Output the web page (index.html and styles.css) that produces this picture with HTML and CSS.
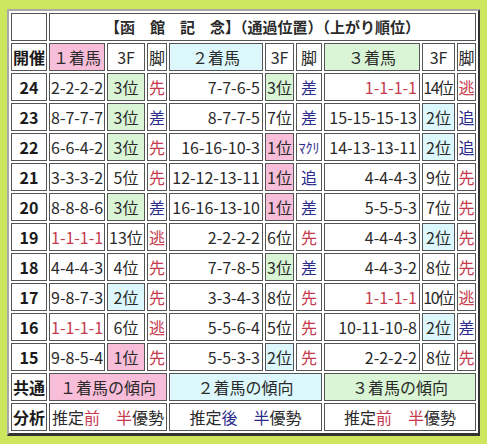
FILE: index.html
```html
<!DOCTYPE html>
<html lang="ja">
<head>
<meta charset="utf-8">
<title>函館記念</title>
<link rel="stylesheet" href="styles.css">
</head>
<body>
<table class="race">
  <colgroup>
    <col class="c-year"><col class="c-pos1"><col class="c-f1"><col class="c-k1">
    <col class="c-pos2"><col class="c-f2"><col class="c-k2">
    <col class="c-pos3"><col class="c-f3"><col class="c-k3">
  </colgroup>
  <tr>
    <td></td>
    <td colspan="9" class="title">【函　館　記　念】（通過位置）（上がり順位）</td>
  </tr>
  <tr class="head">
    <td class="lbl">開催</td>
    <td class="pink">１着馬</td><td>3F</td><td>脚</td>
    <td class="cyan">２着馬</td><td>3F</td><td>脚</td>
    <td class="green">３着馬</td><td>3F</td><td>脚</td>
  </tr>
  <tr>
    <td class="lbl">24</td>
    <td class="p1">2-2-2-2</td><td class="green">3位</td><td class="r">先</td>
    <td class="pr">7-7-6-5</td><td class="green">3位</td><td class="b">差</td>
    <td class="pr r">1-1-1-1</td><td class="tight">14位</td><td class="r">逃</td>
  </tr>
  <tr>
    <td class="lbl">23</td>
    <td class="p1">8-7-7-7</td><td class="green">3位</td><td class="b">差</td>
    <td class="pr">8-7-7-5</td><td>7位</td><td class="b">差</td>
    <td class="pr">15-15-15-13</td><td class="cyan">2位</td><td class="b">追</td>
  </tr>
  <tr>
    <td class="lbl">22</td>
    <td class="p1">6-6-4-2</td><td class="green">3位</td><td class="r">先</td>
    <td class="pr">16-16-10-3</td><td class="pink">1位</td><td class="b small">ﾏｸﾘ</td>
    <td class="pr">14-13-13-11</td><td class="cyan">2位</td><td class="b">追</td>
  </tr>
  <tr>
    <td class="lbl">21</td>
    <td class="p1">3-3-3-2</td><td>5位</td><td class="r">先</td>
    <td class="pr">12-12-13-11</td><td class="pink">1位</td><td class="b">追</td>
    <td class="pr">4-4-4-3</td><td>9位</td><td class="r">先</td>
  </tr>
  <tr>
    <td class="lbl">20</td>
    <td class="p1">8-8-8-6</td><td class="green">3位</td><td class="b">差</td>
    <td class="pr">16-16-13-10</td><td class="pink">1位</td><td class="b">差</td>
    <td class="pr">5-5-5-3</td><td>7位</td><td class="r">先</td>
  </tr>
  <tr>
    <td class="lbl">19</td>
    <td class="p1 r">1-1-1-1</td><td>13位</td><td class="r">逃</td>
    <td class="pr">2-2-2-2</td><td>6位</td><td class="r">先</td>
    <td class="pr">4-4-4-3</td><td class="cyan">2位</td><td class="r">先</td>
  </tr>
  <tr>
    <td class="lbl">18</td>
    <td class="p1">4-4-4-3</td><td>4位</td><td class="r">先</td>
    <td class="pr">7-7-8-5</td><td class="green">3位</td><td class="b">差</td>
    <td class="pr">4-4-3-2</td><td>8位</td><td class="r">先</td>
  </tr>
  <tr>
    <td class="lbl">17</td>
    <td class="p1">9-8-7-3</td><td class="cyan">2位</td><td class="r">先</td>
    <td class="pr">3-3-4-3</td><td>8位</td><td class="r">先</td>
    <td class="pr r">1-1-1-1</td><td class="tight">10位</td><td class="r">逃</td>
  </tr>
  <tr>
    <td class="lbl">16</td>
    <td class="p1 r">1-1-1-1</td><td>6位</td><td class="r">逃</td>
    <td class="pr">5-5-6-4</td><td>5位</td><td class="r">先</td>
    <td class="pr">10-11-10-8</td><td class="cyan">2位</td><td class="b">差</td>
  </tr>
  <tr>
    <td class="lbl">15</td>
    <td class="p1">9-8-5-4</td><td class="pink">1位</td><td class="r">先</td>
    <td class="pr">5-5-3-3</td><td class="cyan">2位</td><td class="r">先</td>
    <td class="pr">2-2-2-2</td><td>8位</td><td class="r">先</td>
  </tr>
  <tr class="trend">
    <td class="lbl">共通</td>
    <td colspan="3" class="pink">１着馬の傾向</td>
    <td colspan="3" class="cyan">２着馬の傾向</td>
    <td colspan="3" class="green">３着馬の傾向</td>
  </tr>
  <tr>
    <td class="lbl">分析</td>
    <td colspan="3">推定<span class="r">前</span>　<span class="r">半</span>優勢</td>
    <td colspan="3">推定<span class="b">後</span>　<span class="b">半</span>優勢</td>
    <td colspan="3">推定<span class="r">前</span>　<span class="r">半</span>優勢</td>
  </tr>
</table>
</body>
</html>
```

FILE: styles.css
```css
html, body {
  background: #cde65e;
}
body {
  margin: 9px 7px;
  font-family: "Noto Sans CJK JP", "Noto Sans", sans-serif;
}
.race {
  table-layout: fixed;
  width: 474px;
  box-sizing: border-box;
  border-collapse: separate;
  border-spacing: 2px;
  background: #fff;
  border-style: solid;
  border-width: 2px 3px 3px 2px;
  border-color: #a8a8a8 #333 #333 #a8a8a8;
  font-size: 16px;
  color: #2a2a2a;
}
.c-year { width: 36px; }
.c-pos1 { width: 56px; }
.c-f1 { width: 38px; }
.c-k1 { width: 20px; }
.c-pos2 { width: 94px; }
.c-f2 { width: 29px; }
.c-k2 { width: 26px; }
.c-pos3 { width: 96px; }
.c-f3 { width: 33px; }
.c-k3 { width: 19px; }
.race td {
  border: 1px solid #555;
  height: 28px;
  box-sizing: border-box;
  padding: 0;
  text-align: center;
  white-space: nowrap;
  overflow: visible;
  line-height: 20px;
}
.race td.title {
  font-size: 15px;
  font-weight: 700;
}
.race td.lbl {
  font-weight: 700;
  color: #1a1a1a;
}
.race td.p1 {
  text-align: left;
  padding-left: 1px;
}
.race td.pr {
  text-align: right;
  padding-right: 2px;
}
.race td.small {
  font-size: 14px;
}
.race td.tight {
  letter-spacing: -1.5px;
  text-indent: -1px;
}
.pink { background: #f8bdd9; }
.cyan { background: #dcf8fc; }
.green { background: #d9f5d6; }
.r { color: #c53a4c; }
.b { color: #2b2b8c; }
```
